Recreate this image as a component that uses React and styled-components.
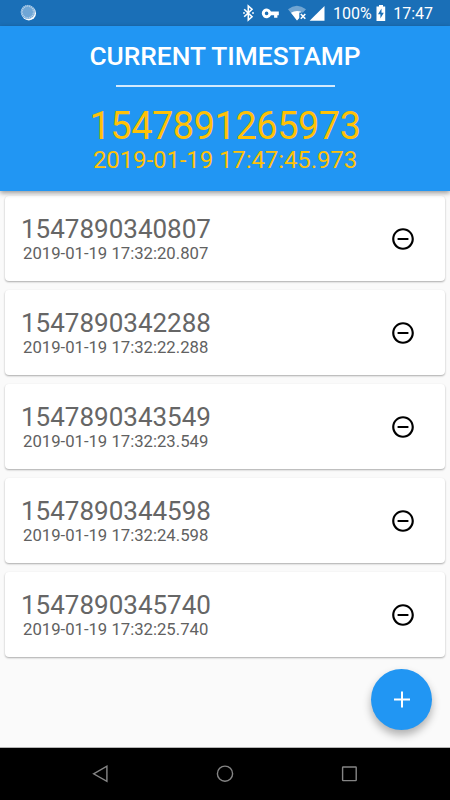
import styled, { createGlobalStyle } from "styled-components";

const timestamps = [
  { id: "1547890340807", date: "2019-01-19 17:32:20.807" },
  { id: "1547890342288", date: "2019-01-19 17:32:22.288" },
  { id: "1547890343549", date: "2019-01-19 17:32:23.549" },
  { id: "1547890344598", date: "2019-01-19 17:32:24.598" },
  { id: "1547890345740", date: "2019-01-19 17:32:25.740" },
];

// spinner teeth around the notification dot
const teeth = Array.from({ length: 20 }, (_, i) => i * 18);

function StatusIcons() {
  return (
    <svg width="86" height="26" viewBox="0 0 86 26" fill="#fff">
      <path
        d="M4.2 9.2 12 16.8 8.3 20V6L12 9.2 4.2 16.8"
        fill="none"
        stroke="#fff"
        strokeWidth="1.6"
      />
      <circle cx="4" cy="13" r="0.9" />
      <circle cx="13" cy="13" r="0.9" />
      <path
        fillRule="evenodd"
        d="M31 11.5A4.8 4.8 0 1 0 31 15.2H34.1V17.7H37.4V15.2H38.8V11.5ZM26.6 11.6a1.8 1.8 0 1 1 0 3.6 1.8 1.8 0 0 1 0-3.6Z"
      />
      <path opacity="0.38" d="M48 9.2Q56.8 2.2 66 9.2L63 12.6H59V18.3L57 20.5Z" />
      <path d="M51 12.7Q55.3 10.2 60.8 11.5V12.6H59.3V18L57 20.6Z" />
      <path d="m60.8 14 4.5 4.7m0-4.7-4.5 4.7" fill="none" stroke="#fff" strokeWidth="1.6" />
      <path d="M84.5 6V20.8H69.6Z" />
    </svg>
  );
}

export default function App() {
  return (
    <Screen>
      <GlobalStyle />
      <StatusBar>
        <svg width="18" height="18" viewBox="0 0 18 18">
          <circle cx="8.8" cy="9.2" r="7.2" fill="#fff" />
          <circle cx="7.8" cy="8" r="7.1" fill="#6fa6d6" />
          {teeth.map((angle) => (
            <path
              key={angle}
              d="M7.8 .9v2"
              stroke="#b4d0e9"
              strokeWidth="1"
              transform={`rotate(${angle} 7.8 8)`}
            />
          ))}
        </svg>
        <StatusGroup>
          <StatusIcons />
          <StatusText $left={7}>100%</StatusText>
          <svg width="10" height="26" viewBox="0 0 10 26">
            <path d="M3 5H7V6.6H9.2V20.9H.5V6.6H3Z" fill="#fff" />
            <path d="M5.5 8.5 2 14.2H4.4V18.6L7.8 12.8H5.5Z" fill="#1a6fb7" />
          </svg>
          <StatusText $left={7}>17:47</StatusText>
        </StatusGroup>
      </StatusBar>

      <Header>
        <Title>CURRENT TIMESTAMP</Title>
        <Divider />
        <CurrentStamp>1547891265973</CurrentStamp>
        <CurrentDate>2019-01-19 17:47:45.973</CurrentDate>
      </Header>

      <List>
        {timestamps.map((item) => (
          <Card key={item.id}>
            <div>
              <Stamp>{item.id}</Stamp>
              <StampDate>{item.date}</StampDate>
            </div>
            <IconButton aria-label="Remove">
              <svg width="26" height="26" viewBox="0 0 24 24" fill="#000">
                <path d="M7 11v2h10v-2H7zm5-9C6.48 2 2 6.48 2 12s4.48 10 10 10 10-4.48 10-10S17.52 2 12 2zm0 18c-4.41 0-8-3.59-8-8s3.59-8 8-8 8 3.59 8 8-3.59 8-8 8z" />
              </svg>
            </IconButton>
          </Card>
        ))}
      </List>

      <AddButton aria-label="Add">
        <svg width="28" height="28" viewBox="0 0 28 28">
          <path d="M14 5.5v16M6 13.5h16" stroke="#fff" strokeWidth="2" />
        </svg>
      </AddButton>

      <NavBar>
        <svg width="20" height="20" viewBox="0 0 20 20">
          <path d="M3.6 9.8 16.9 2.2V17.4Z" />
        </svg>
        <svg width="20" height="20" viewBox="0 0 20 20">
          <circle cx="10" cy="9.7" r="7.6" />
        </svg>
        <svg width="20" height="20" viewBox="0 0 20 20">
          <rect x="3.6" y="3" width="13.6" height="13.6" rx="0.5" />
        </svg>
      </NavBar>
    </Screen>
  );
}

const GlobalStyle = createGlobalStyle`
  * {
    box-sizing: border-box;
  }
  body {
    margin: 0;
    font-family: Roboto, sans-serif;
  }
  svg {
    display: block;
    flex-shrink: 0;
  }
`;

const Screen = styled.div`
  position: relative;
  display: flex;
  flex-direction: column;
  width: 450px;
  height: 800px;
  overflow: hidden;
  background: #fafafa;
`;

const StatusBar = styled.div`
  display: flex;
  justify-content: space-between;
  align-items: center;
  height: 26px;
  padding: 0 17px 0 20px;
  background: #1a6fb7;
`;

const StatusGroup = styled.div`
  display: flex;
  align-items: center;
`;

const StatusText = styled.span`
  margin: 1px 4.5px 0 ${(props) => props.$left}px;
  color: #fff;
  font-size: 16px;
  line-height: 20px;

  &:last-child {
    margin-right: 0;
  }
`;

const Header = styled.header`
  position: relative;
  display: flex;
  flex-direction: column;
  align-items: center;
  height: 165px;
  padding-top: 14px;
  background: #2196f3;
  box-shadow: 0 2px 5px rgba(0, 0, 0, 0.4);
`;

const Title = styled.h1`
  margin: 0;
  color: #fff;
  font-size: 26.3px;
  font-weight: 500;
  line-height: 32px;
  white-space: nowrap;
`;

const Divider = styled.div`
  width: 219px;
  height: 2px;
  margin-top: 13px;
  background: #d3eafd;
`;

const CurrentStamp = styled.div`
  margin-top: 17px;
  color: #ffc107;
  font-size: 38px;
  letter-spacing: -0.5px;
  line-height: 44px;
`;

const CurrentDate = styled.div`
  margin-top: -2px;
  color: #ffc107;
  font-size: 24px;
  letter-spacing: -0.1px;
  line-height: 28px;
`;

const List = styled.main`
  display: flex;
  flex: 1;
  flex-direction: column;
  gap: 9px;
  padding: 5px;
`;

const Card = styled.section`
  display: flex;
  justify-content: space-between;
  align-items: center;
  height: 85px;
  padding: 1px 29px 0 16px;
  border-radius: 4px;
  background: #fff;
  box-shadow: 0 1px 2px rgba(0, 0, 0, 0.32);
`;

const Stamp = styled.div`
  color: #666;
  font-size: 26px;
  line-height: 30px;
`;

const StampDate = styled.div`
  margin-left: 2px;
  color: #616161;
  font-size: 16.7px;
  line-height: 20px;
`;

const IconButton = styled.button`
  padding: 0;
  border: 0;
  background: none;
`;

const AddButton = styled.button`
  position: absolute;
  right: 18px;
  bottom: 70px;
  display: flex;
  justify-content: center;
  align-items: center;
  width: 61px;
  height: 61px;
  padding: 0;
  border: 0;
  border-radius: 50%;
  background: #2196f3;
  box-shadow: 0 5px 8px rgba(0, 0, 0, 0.3);
`;

const NavBar = styled.nav`
  display: flex;
  justify-content: space-between;
  align-items: center;
  height: 53px;
  padding: 0 91px 0 90px;
  border-top: 1px solid #b4b4b4;
  background: #000;

  svg {
    fill: none;
    stroke: #858585;
    stroke-width: 1.4;
  }
`;
